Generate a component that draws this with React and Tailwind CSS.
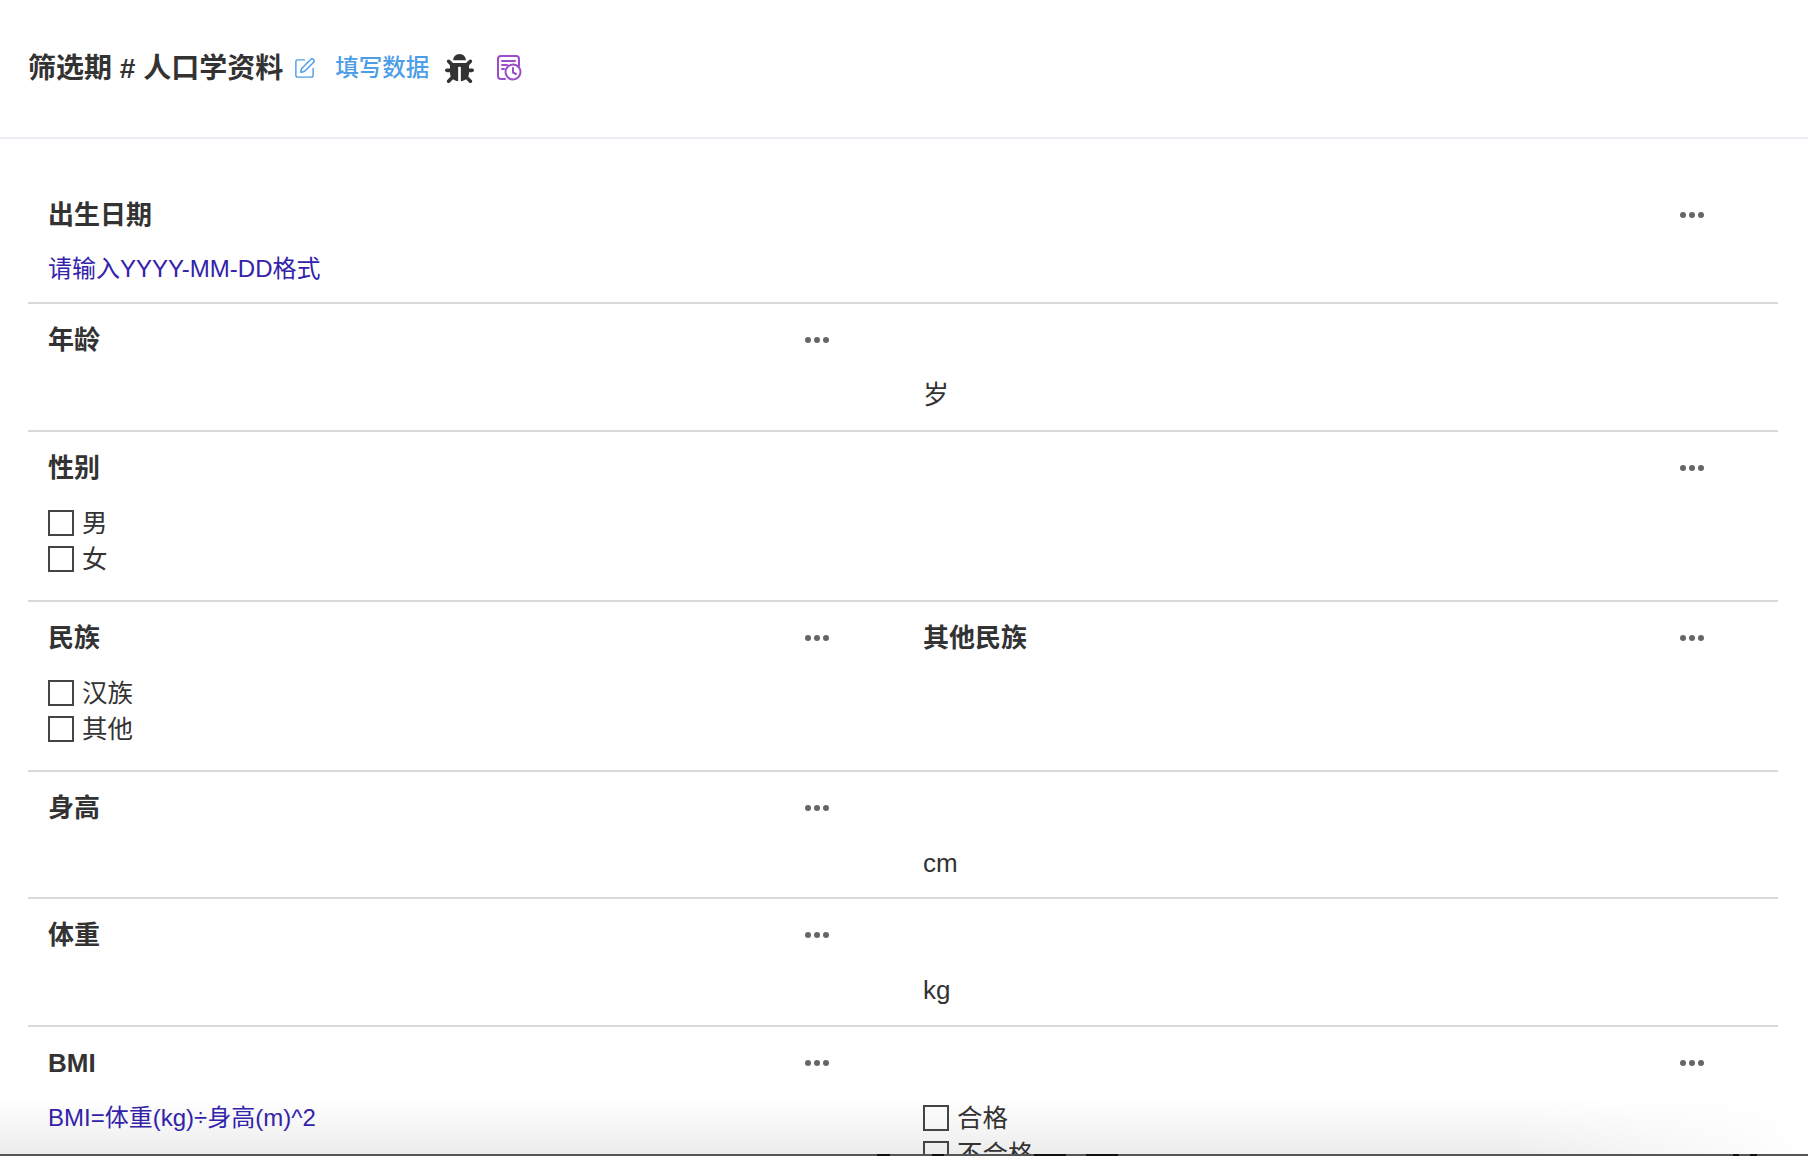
import React from 'react';
import { SquarePen } from 'lucide-react';
import { FaBug } from 'react-icons/fa';

const Dots = () => (
  <div className="flex gap-[3px] mr-[54px]">
    <span className="w-[6px] h-[6px] rounded-full bg-[#666]" />
    <span className="w-[6px] h-[6px] rounded-full bg-[#666]" />
    <span className="w-[6px] h-[6px] rounded-full bg-[#666]" />
  </div>
);

const Check = ({ label }) => (
  <div className="flex items-center h-[36px]">
    <span className="w-[26px] h-[26px] border-2 border-[#444]" />
    <span className="ml-[8px] text-[25.5px] text-[#333]">{label}</span>
  </div>
);

const Cell = ({ label, dots = true, first, children }) => (
  <div className={`px-5 flex-1 min-w-0 ${first ? 'pt-[19px]' : 'pt-[16px]'}`}>
    <div className="h-[40px] flex items-center justify-between">
      <span className="text-[26px] font-bold text-[#333]">{label}</span>
      {dots && <Dots />}
    </div>
    <div className={first ? 'mt-[16px]' : 'mt-[17px]'}>{children}</div>
  </div>
);

const Hint = ({ children }) => <div className="h-[36px] leading-[36px] text-[24px] text-[#3322aa]">{children}</div>;
const Plain = ({ children }) => <div className="h-[36px] leading-[36px] text-[26px] text-[#333]">{children}</div>;

const Row = ({ h, children, last }) => (
  <div className={`flex ${h} ${last ? '' : 'border-b-2 border-[#d9d9d9]'}`}>{children}</div>
);

const HistoryIcon = () => (
  <svg width="25" height="26" viewBox="0 0 25 26" fill="none" stroke="#9b4dca" strokeWidth="2" strokeLinecap="round" strokeLinejoin="round">
    <path d="M8 24H4a3 3 0 0 1-3-3V4a3 3 0 0 1 3-3h15a3 3 0 0 1 3 3v7" />
    <path d="M5 6h13M5 10h5M5 14h2" />
    <circle cx="16" cy="17" r="7.5" />
    <path d="M16 13v4.5l3 1.5" />
  </svg>
);

const bottomBits = [
  { left: 'left-[877px]', w: 'w-[13px]' },
  { left: 'left-[932px]', w: 'w-[12px]' },
  { left: 'left-[1034px]', w: 'w-[32px]' },
  { left: 'left-[1086px]', w: 'w-[32px]' },
  { left: 'left-[1733px]', w: 'w-[6px]' },
  { left: 'left-[1750px]', w: 'w-[7px]' },
];

export default function App() {
  return (
    <div className="relative h-[1156px] w-full overflow-hidden bg-white font-['Liberation_Sans','Noto_Sans_CJK_SC',sans-serif]">
      {/* shadow of the window below, sits behind the form */}
      <div className="absolute inset-x-0 bottom-0 h-[58px] bg-gradient-to-b from-white/0 to-[#ececec]" />
      <div className="absolute right-0 bottom-0 h-[58px] w-[300px] bg-gradient-to-r from-white/0 to-white" />

      <div className="relative">
        {/* header */}
        <div className="h-[139px] border-b-2 border-[#ececf2] pl-[28px] pt-[48px] flex items-start">
          <div className="flex items-center h-[40px]">
            <span className="text-[28px] font-bold text-[#333] mt-[1px]">筛选期 # 人口学资料</span>
            <SquarePen className="ml-[10px] text-[#4d9de8]" size={23} strokeWidth={1.5} />
            <span className="ml-[19px] text-[23.5px] font-medium text-[#4d9de8] mt-[1px]">填写数据</span>
            <FaBug className="ml-[16px] text-[#333]" size={29} />
            <span className="ml-[23px] flex"><HistoryIcon /></span>
          </div>
        </div>

        <div className="ml-[28px] mr-[30px] mt-[37px]">
          <Row h="h-[128px]">
            <Cell first label="出生日期"><Hint>请输入YYYY-MM-DD格式</Hint></Cell>
          </Row>
          <Row h="h-[128px]">
            <Cell label="年龄" />
            <Cell label="" dots={false}><Plain>岁</Plain></Cell>
          </Row>
          <Row h="h-[170px]">
            <Cell label="性别"><Check label="男" /><Check label="女" /></Cell>
          </Row>
          <Row h="h-[170px]">
            <Cell label="民族"><Check label="汉族" /><Check label="其他" /></Cell>
            <Cell label="其他民族" />
          </Row>
          <Row h="h-[127px]">
            <Cell label="身高" />
            <Cell label="" dots={false}><Plain>cm</Plain></Cell>
          </Row>
          <Row h="h-[128px]">
            <Cell label="体重" />
            <Cell label="" dots={false}><Plain>kg</Plain></Cell>
          </Row>
          <Row h="h-[170px]" last>
            <Cell label="BMI"><Hint>BMI=体重(kg)÷身高(m)^2</Hint></Cell>
            <Cell label=""><Check label="合格" /><Check label="不合格" /></Cell>
          </Row>
        </div>
      </div>

      <div className="absolute inset-x-0 bottom-0 h-[2px] bg-[#555]" />
      {bottomBits.map((b) => (
        <span key={b.left} className={`absolute bottom-0 h-[2px] bg-[#111] ${b.left} ${b.w}`} />
      ))}
    </div>
  );
}
